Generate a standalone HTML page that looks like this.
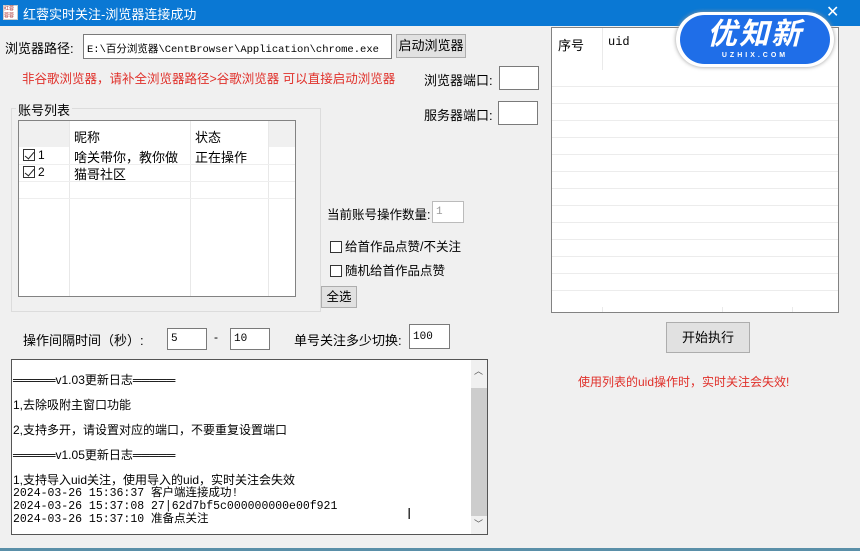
<!DOCTYPE html>
<html><head><meta charset="utf-8"><style>
*{margin:0;padding:0;box-sizing:border-box}
body{width:860px;height:551px;background:#f0f0f0;font-family:"Liberation Sans","Noto Sans CJK SC",sans-serif;font-size:12px;color:#000;position:relative;overflow:hidden}
.a{position:absolute;white-space:nowrap}
.inp{position:absolute;background:#fff;border:1px solid #7a7a7a;font-family:"Liberation Mono",monospace;font-size:11px;padding:4px 3px 0;white-space:nowrap;overflow:hidden}
.btn{position:absolute;background:#e1e1e1;border:1px solid #adadad;text-align:center}
.cb{display:inline-block;width:12px;height:12px;border:1px solid #333;background:#fff;vertical-align:-2px;margin-right:3px;position:relative}
.cb.c::after{content:"";position:absolute;left:3px;top:0px;width:4px;height:8px;border:solid #222;border-width:0 1.5px 1.5px 0;transform:rotate(40deg)}
.red{color:#e0302a}
</style></head><body>
<div class="a" style="left:0;top:0;width:860px;height:26px;background:#0a78d4"></div>
<div class="a" style="left:3px;top:5px;width:15px;height:15px;background:#fff;border:1px solid #ccc;font-size:5px;line-height:7px;color:#a33">红蓉<br>蓉蓉</div>
<div class="a" style="left:23px;top:4px;color:#fff;font-size:13px">红蓉实时关注-浏览器连接成功</div>
<div class="a" style="left:826px;top:2px;color:#fff;font-size:16px">✕</div>

<div class="a" style="left:5px;top:38px;font-size:13px">浏览器路径:</div>
<div class="inp" style="left:83px;top:34px;width:309px;height:25px;padding-top:6px;font-size:10.5px;font-family:'Liberation Mono','Noto Sans CJK SC',monospace">E:\百分浏览器\CentBrowser\Application\chrome.exe</div>
<div class="btn" style="left:396px;top:34px;width:70px;height:24px;line-height:22px;font-size:13px">启动浏览器</div>
<div class="a red" style="left:22px;top:68px;font-size:12.5px">非谷歌浏览器，请补全浏览器路径&gt;谷歌浏览器 可以直接启动浏览器</div>

<div class="a" style="left:424px;top:70px;font-size:13px">浏览器端口:</div>
<div class="inp" style="left:499px;top:66px;width:40px;height:24px"></div>
<div class="a" style="left:424px;top:105px;font-size:13px">服务器端口:</div>
<div class="inp" style="left:498px;top:101px;width:40px;height:24px"></div>

<div class="a" style="left:11px;top:108px;width:310px;height:204px;border:1px solid #dcdcdc"></div>
<div class="a" style="left:16px;top:100px;background:#f0f0f0;padding:0 2px;font-size:13px">账号列表</div>
<div class="a" style="left:18px;top:120px;width:278px;height:177px;background:#fff;border:1px solid #828282">
 <div class="a" style="left:0;top:0;width:50px;height:26px;background:#f0f0f0"></div>
 <div class="a" style="left:249px;top:0;width:27px;height:26px;background:#f0f0f0"></div>
 <div class="a" style="left:50px;top:0;width:1px;height:175px;background:#e8e8e8"></div>
 <div class="a" style="left:171px;top:0;width:1px;height:175px;background:#e8e8e8"></div>
 <div class="a" style="left:249px;top:0;width:1px;height:175px;background:#e8e8e8"></div>
 <div class="a" style="left:55px;top:6px;font-size:13px">昵称</div>
 <div class="a" style="left:176px;top:6px;font-size:13px">状态</div>
 <div class="a" style="left:4px;top:27px;font-size:12px"><span class="cb c"></span>1</div>
 <div class="a" style="left:55px;top:26px;font-size:13px">啥关带你，教你做</div>
 <div class="a" style="left:176px;top:26px;font-size:13px">正在操作</div>
 <div class="a" style="left:4px;top:44px;font-size:12px"><span class="cb c"></span>2</div>
 <div class="a" style="left:55px;top:43px;font-size:13px">猫哥社区</div>
 <div class="a" style="left:0;top:43px;width:276px;height:1px;background:#eee"></div>
 <div class="a" style="left:0;top:60px;width:276px;height:1px;background:#eee"></div>
 <div class="a" style="left:0;top:77px;width:276px;height:1px;background:#eee"></div>
</div>

<div class="a" style="left:327px;top:204px;font-size:12.5px">当前账号操作数量:</div>
<div class="inp" style="left:432px;top:201px;width:32px;height:22px;color:#999;border-color:#bbb">1</div>
<div class="a" style="left:330px;top:236px;font-size:12.5px"><span class="cb"></span>给首作品点赞/不关注</div>
<div class="a" style="left:330px;top:260px;font-size:12.5px"><span class="cb"></span>随机给首作品点赞</div>
<div class="btn" style="left:321px;top:286px;width:36px;height:22px;line-height:20px;font-size:12.5px">全选</div>

<div class="a" style="left:551px;top:27px;width:288px;height:286px;background:#fff;border:1px solid #828282">
 <div class="a" style="left:50px;top:0;width:1px;height:284px;background:#eaeaea"></div>
 <div class="a" style="left:170px;top:42px;width:1px;height:242px;background:#eaeaea"></div>
 <div class="a" style="left:240px;top:42px;width:1px;height:242px;background:#eaeaea"></div>
 <div class="a" style="left:6px;top:7px;font-size:13px">序号</div>
 <div class="a" style="left:56px;top:7px;font-family:'Liberation Mono',monospace;font-size:12px">uid</div>
 <div class="a" style="left:0;top:42px;width:286px;height:237px;background:repeating-linear-gradient(#fff 0,#fff 16px,#ececec 16px,#ececec 17px)"></div>
</div>

<div class="a" style="left:676px;top:12px;width:158px;height:55px;border-radius:28px;background:#fff;box-shadow:0 0 4px #999"></div>
<div class="a" style="left:680px;top:15px;width:150px;height:49px;border-radius:25px;background:#1f6ee8"></div>
<div class="a" style="left:690px;top:17px;width:130px;text-align:center;color:#fff;font-size:30px;font-weight:bold;font-style:italic;letter-spacing:2px;line-height:36px">优知新</div>
<div class="a" style="left:690px;top:52px;width:130px;text-align:center;color:#fff;font-size:7px;font-weight:bold;letter-spacing:3px">UZHIX.COM</div>

<div class="a" style="left:23px;top:330px;font-size:13px">操作间隔时间（秒）:</div>
<div class="inp" style="left:167px;top:328px;width:40px;height:22px">5</div>
<div class="a" style="left:214px;top:330px">-</div>
<div class="inp" style="left:230px;top:328px;width:40px;height:22px">10</div>
<div class="a" style="left:294px;top:330px;font-size:13px">单号关注多少切换:</div>
<div class="inp" style="left:409px;top:324px;width:41px;height:25px;padding-top:6px">100</div>

<div class="btn" style="left:666px;top:322px;width:84px;height:31px;line-height:29px;font-size:13px">开始执行</div>
<div class="a red" style="left:578px;top:373px;font-size:12px">使用列表的uid操作时，实时关注会失效!</div>

<div class="a" style="left:11px;top:359px;width:477px;height:176px;background:#fff;border:1px solid #555;font-size:12px;line-height:13px">
 <div class="a" style="left:459px;top:0;width:16px;height:174px;background:#f0f0f0"></div>
 <div class="a" style="left:459px;top:28px;width:16px;height:128px;background:#cdcdcd"></div>
 <div class="a" style="left:462px;top:5px;font-size:9px;color:#555">︿</div>
 <div class="a" style="left:462px;top:158px;font-size:9px;color:#555">﹀</div>
 <div class="a" style="left:1px;top:14px">═════v1.03更新日志═════</div>
 <div class="a" style="left:1px;top:39px">1,去除吸附主窗口功能</div>
 <div class="a" style="left:1px;top:64px">2,支持多开，请设置对应的端口，不要重复设置端口</div>
 <div class="a" style="left:1px;top:89px">═════v1.05更新日志═════</div>
 <div class="a" style="left:1px;top:114px">1,支持导入uid关注，使用导入的uid，实时关注会失效</div>
 <div class="a" style="left:1px;top:127px;font-family:'Liberation Mono','Noto Sans CJK SC',monospace;font-size:11.5px;line-height:13px">2024-03-26 15:36:37 客户端连接成功!<br>2024-03-26 15:37:08 27|62d7bf5c000000000e00f921<br>2024-03-26 15:37:10 准备点关注</div>
 <div class="a" style="left:395px;top:148px;font-size:16px;color:#333">I</div>
</div>
<div class="a" style="left:0;top:548px;width:860px;height:3px;background:#5a8fa8"></div>
</body></html>
